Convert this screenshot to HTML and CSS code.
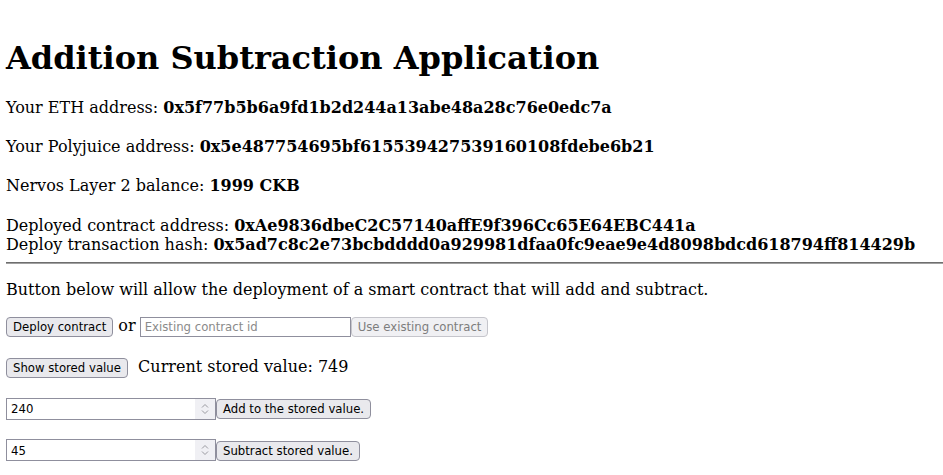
FILE: index.html
```
<!DOCTYPE html>
<html>
<head>
<meta charset="utf-8">
<link rel="stylesheet" href="styles.css">
</head>
<body>
<div class="app">
<h1 class="title">Addition Subtraction Application</h1>
Your ETH address: <b>0x5f77b5b6a9fd1b2d244a13abe48a28c76e0edc7a</b>
<br><br>
Your Polyjuice address: <b>0x5e487754695bf615539427539160108fdebe6b21</b>
<br><br>
Nervos Layer 2 balance: <b>1999 CKB</b>
<br><br>
Deployed contract address: <b>0xAe9836dbeC2C57140affE9f396Cc65E64EBC441a</b>
<br>
Deploy transaction hash: <b>0x5ad7c8c2e73bcbdddd0a929981dfaa0fc9eae9e4d8098bdcd618794ff814429b</b>
<br>
<hr class="rule">
<p class="intro">Button below will allow the deployment of a smart contract that will add and subtract.</p>
<button class="btn">Deploy contract</button>&nbsp;or&nbsp;<input class="field" placeholder="Existing contract id"><button class="btn" disabled>Use existing contract</button>
<br><br>
<button class="btn">Show stored value</button>&nbsp;&nbsp;Current stored value: 749
<br><br>
<span class="numbox"><input class="numin" type="text" value="240"><span class="spin"><svg width="10" height="14" viewBox="0 0 10 14"><path d="M2 5.5 L5 2.5 L8 5.5 M2 8.5 L5 11.5 L8 8.5" fill="none" stroke="#9a9aa0" stroke-width="1"/></svg></span></span><button class="btn">Add to the stored value.</button>
<br><br>
<span class="numbox"><input class="numin" type="text" value="45"><span class="spin"><svg width="10" height="14" viewBox="0 0 10 14"><path d="M2 5.5 L5 2.5 L8 5.5 M2 8.5 L5 11.5 L8 8.5" fill="none" stroke="#9a9aa0" stroke-width="1"/></svg></span></span><button class="btn">Subtract stored value.</button>
</div>
</body>
</html>
```
FILE: styles.css
```
html, body {
  margin: 0;
  background: #fff;
}
body {
  padding: 18px 0 0 6px;
  font-family: "DejaVu Serif", serif;
  font-size: 16px;
  line-height: 19.6px;
  color: #000;
  overflow: hidden;
}
.title {
  font-size: 32px;
  line-height: 37px;
  margin: 22px 0 21px;
}
.rule {
  margin: 7px 0 0;
  border: 0;
  border-top: 1px solid #6e6e6e;
  border-bottom: 1px solid #a0a0a0;
  height: 0;
  width: 100%;
}
.intro {
  margin: 16px 0 17px;
}
.btn {
  box-sizing: border-box;
  height: 20px;
  font-family: "DejaVu Sans", sans-serif;
  font-stretch: condensed;
  font-size: 13px;
  line-height: 16px;
  color: #000;
  background: #e9e9ed;
  border: 1px solid #8f8f9d;
  border-radius: 4px;
  padding: 1px 6px;
  margin: 0;
  vertical-align: baseline;
}
.btn:disabled {
  color: #7d7d7d;
  background: #f0f0f3;
  border-color: #c5c5cb;
}
.field {
  box-sizing: border-box;
  height: 20px;
  font-family: "DejaVu Sans", sans-serif;
  font-stretch: condensed;
  font-size: 13px;
  line-height: 16px;
  width: 211px;
  padding: 1px 4px;
  border: 1px solid #8f8f9d;
  border-radius: 0;
  margin: 0 0 0 -1px;
  color: #000;
}
.field::placeholder {
  color: #8a8a8a;
}
.numbox {
  display: inline-flex;
  align-items: stretch;
  border: 1px solid #8f8f9d;
  width: 210px;
  height: 22px;
  box-sizing: border-box;
  vertical-align: baseline;
  background: #fff;
}
.numin {
  flex: 1;
  min-width: 0;
  border: 0;
  outline: none;
  padding: 0 4px;
  margin: 0;
  font-family: "DejaVu Sans", sans-serif;
  font-stretch: condensed;
  font-size: 13px;
  color: #000;
  background: transparent;
}
.spin {
  width: 20px;
  display: flex;
  align-items: center;
  justify-content: center;
  background: #f0f0f4;
}
```
